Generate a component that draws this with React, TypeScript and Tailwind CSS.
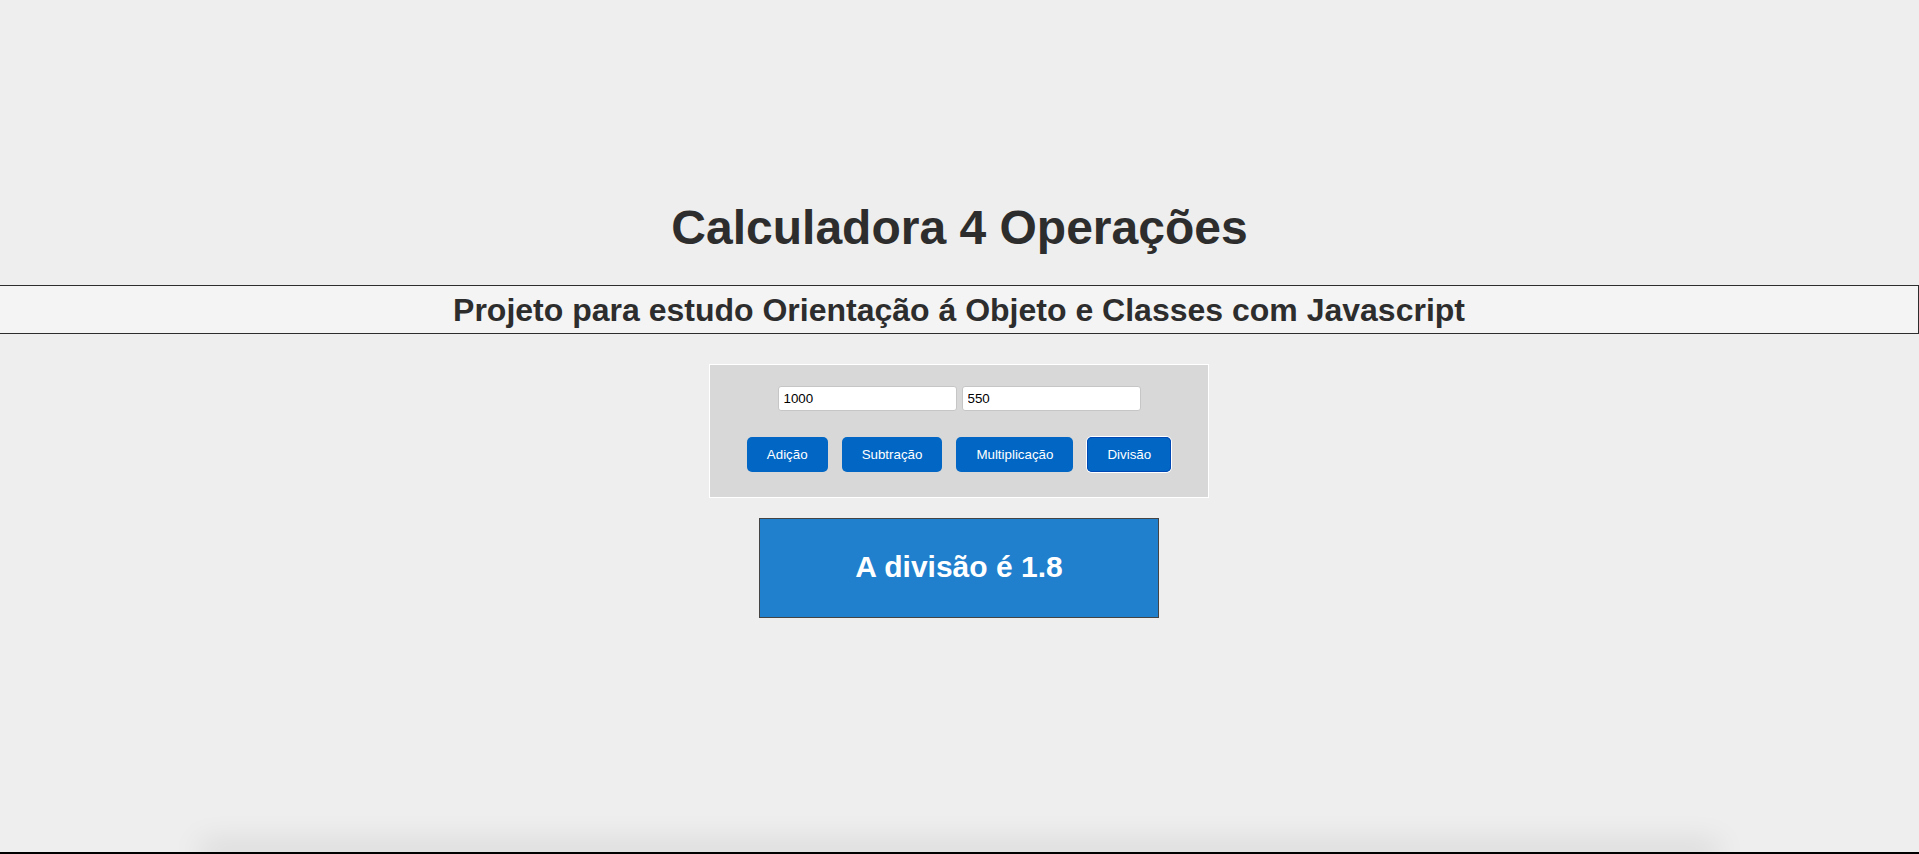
import React from "react";

export default function App() {
  const ops = ["Adição", "Subtração", "Multiplicação", "Divisão"];
  return (
    <div className="min-h-screen flex flex-col bg-[#eeeeee] font-['Liberation_Sans',Arial,sans-serif] text-[#2d2d2d]">
      <div className="pt-[200px]">
        <h1 className="text-center text-[48px] leading-[55px] font-bold">Calculadora 4 Operações</h1>
        <h2 className="mt-[30px] h-[49px] border-y border-r border-[#2d2d2d] bg-[#f4f4f4] flex items-center justify-center text-[32px] font-bold leading-none">
          Projeto para estudo Orientação á Objeto e Classes com Javascript
        </h2>
        <div className="pr-px flex flex-col items-center">
          <div className="mt-[30px] w-[500px] border border-white bg-[#d8d8d8] pt-[21px] pb-[25px] flex flex-col items-center">
            <div className="flex gap-[5px]">
              <input
                defaultValue="1000"
                className="w-[179px] h-[25px] border border-[#c6c6c6] rounded-[3px] bg-white px-[5px] text-[13.33px] text-black outline-none"
              />
              <input
                defaultValue="550"
                className="w-[179px] h-[25px] border border-[#c6c6c6] rounded-[3px] bg-white px-[5px] text-[13.33px] text-black outline-none"
              />
            </div>
            <div className="mt-[26px] flex gap-[14px]">
              {ops.map((op) => (
                <button
                  key={op}
                  className={
                    op === "Divisão"
                      ? "h-[35px] px-5 rounded-[5px] bg-[#0166c4] text-white text-[13.33px] shadow-[inset_0_0_0_1px_#0048b4,0_0_0_1px_#ffffff]"
                      : "h-[35px] px-5 rounded-[5px] bg-[#0166c4] text-white text-[13.33px]"
                  }
                >
                  {op}
                </button>
              ))}
            </div>
          </div>
          <div className="mt-[20px] w-[400px] h-[100px] pb-[3px] border border-[#444444] bg-[#2080ce] flex items-center justify-center text-white text-[30px] font-bold">
            A divisão é 1.8
          </div>
        </div>
      </div>
      <div className="flex-1" />
      <div className="mx-[210px] h-0 shadow-[0_0_30px_10px_rgba(0,0,0,0.1)]" />
      <div className="h-[2px] bg-black" />
    </div>
  );
}
